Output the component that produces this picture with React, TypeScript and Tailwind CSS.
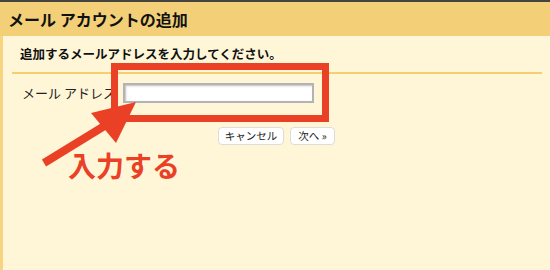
import React from "react";

export default function App() {
  return (
    <div
      className="relative w-[550px] h-[270px] overflow-hidden bg-[#fff6d8] border-t-[2px] border-[#45443f]"
      style={{ fontFamily: '"Noto Sans CJK JP", "Noto Sans", sans-serif' }}
    >
      <div className="h-[34px] bg-[#f3d077] flex items-center pl-[8px]">
        <span className="text-[16px] font-bold text-[#111] leading-none">メール アカウントの追加</span>
      </div>
      <div className="h-[234px] border-l-[3px] border-[#f7d580] pl-[17px] pr-[5px]">
        <div className="pt-[10px] h-[36px] text-[12.5px] font-bold text-[#111] leading-[16px]">
          追加するメールアドレスを入力してください。
        </div>
        <div className="h-[2px] bg-[#f5cf6e] ml-[-8px] mr-[3px]" />
        <div className="flex items-center mt-[8px] h-[22px]">
          <span className="text-[13px] text-[#222] w-[103px] pl-[2px] whitespace-nowrap">メール アドレス</span>
          <div className="w-[191px] h-[20px] bg-white border-[2px] border-[#b3b3b3] shadow-[inset_1px_1px_2px_rgba(0,0,0,0.25)]" />
        </div>
        <div className="flex gap-[6px] mt-[23px] ml-[198px]">
          <button className="w-[66px] h-[18px] flex items-center justify-center bg-white border border-[#dcdcdc] rounded-[4px] text-[10.5px] text-[#222] leading-none">キャンセル</button>
          <button className="w-[45px] h-[18px] flex items-center justify-center bg-white border border-[#dcdcdc] rounded-[4px] text-[10.5px] text-[#222] leading-none">次へ »</button>
        </div>
      </div>

      {/* annotation rectangle */}
      <div className="absolute left-[111px] top-[61px] w-[218px] h-[59px] border-[7px] border-[#ea4126]" />

      {/* arrow */}
      <svg className="absolute left-0 top-0" width="550" height="270">
        <line x1="44" y1="161" x2="106" y2="123" stroke="#ea4126" strokeWidth="8" />
        <polygon points="136,100 91,111 116,141" fill="#ea4126" />
      </svg>

      <div className="absolute left-[68px] top-[149px] text-[28px] font-bold text-[#ea4126] leading-none">
        入力する
      </div>
    </div>
  );
}
